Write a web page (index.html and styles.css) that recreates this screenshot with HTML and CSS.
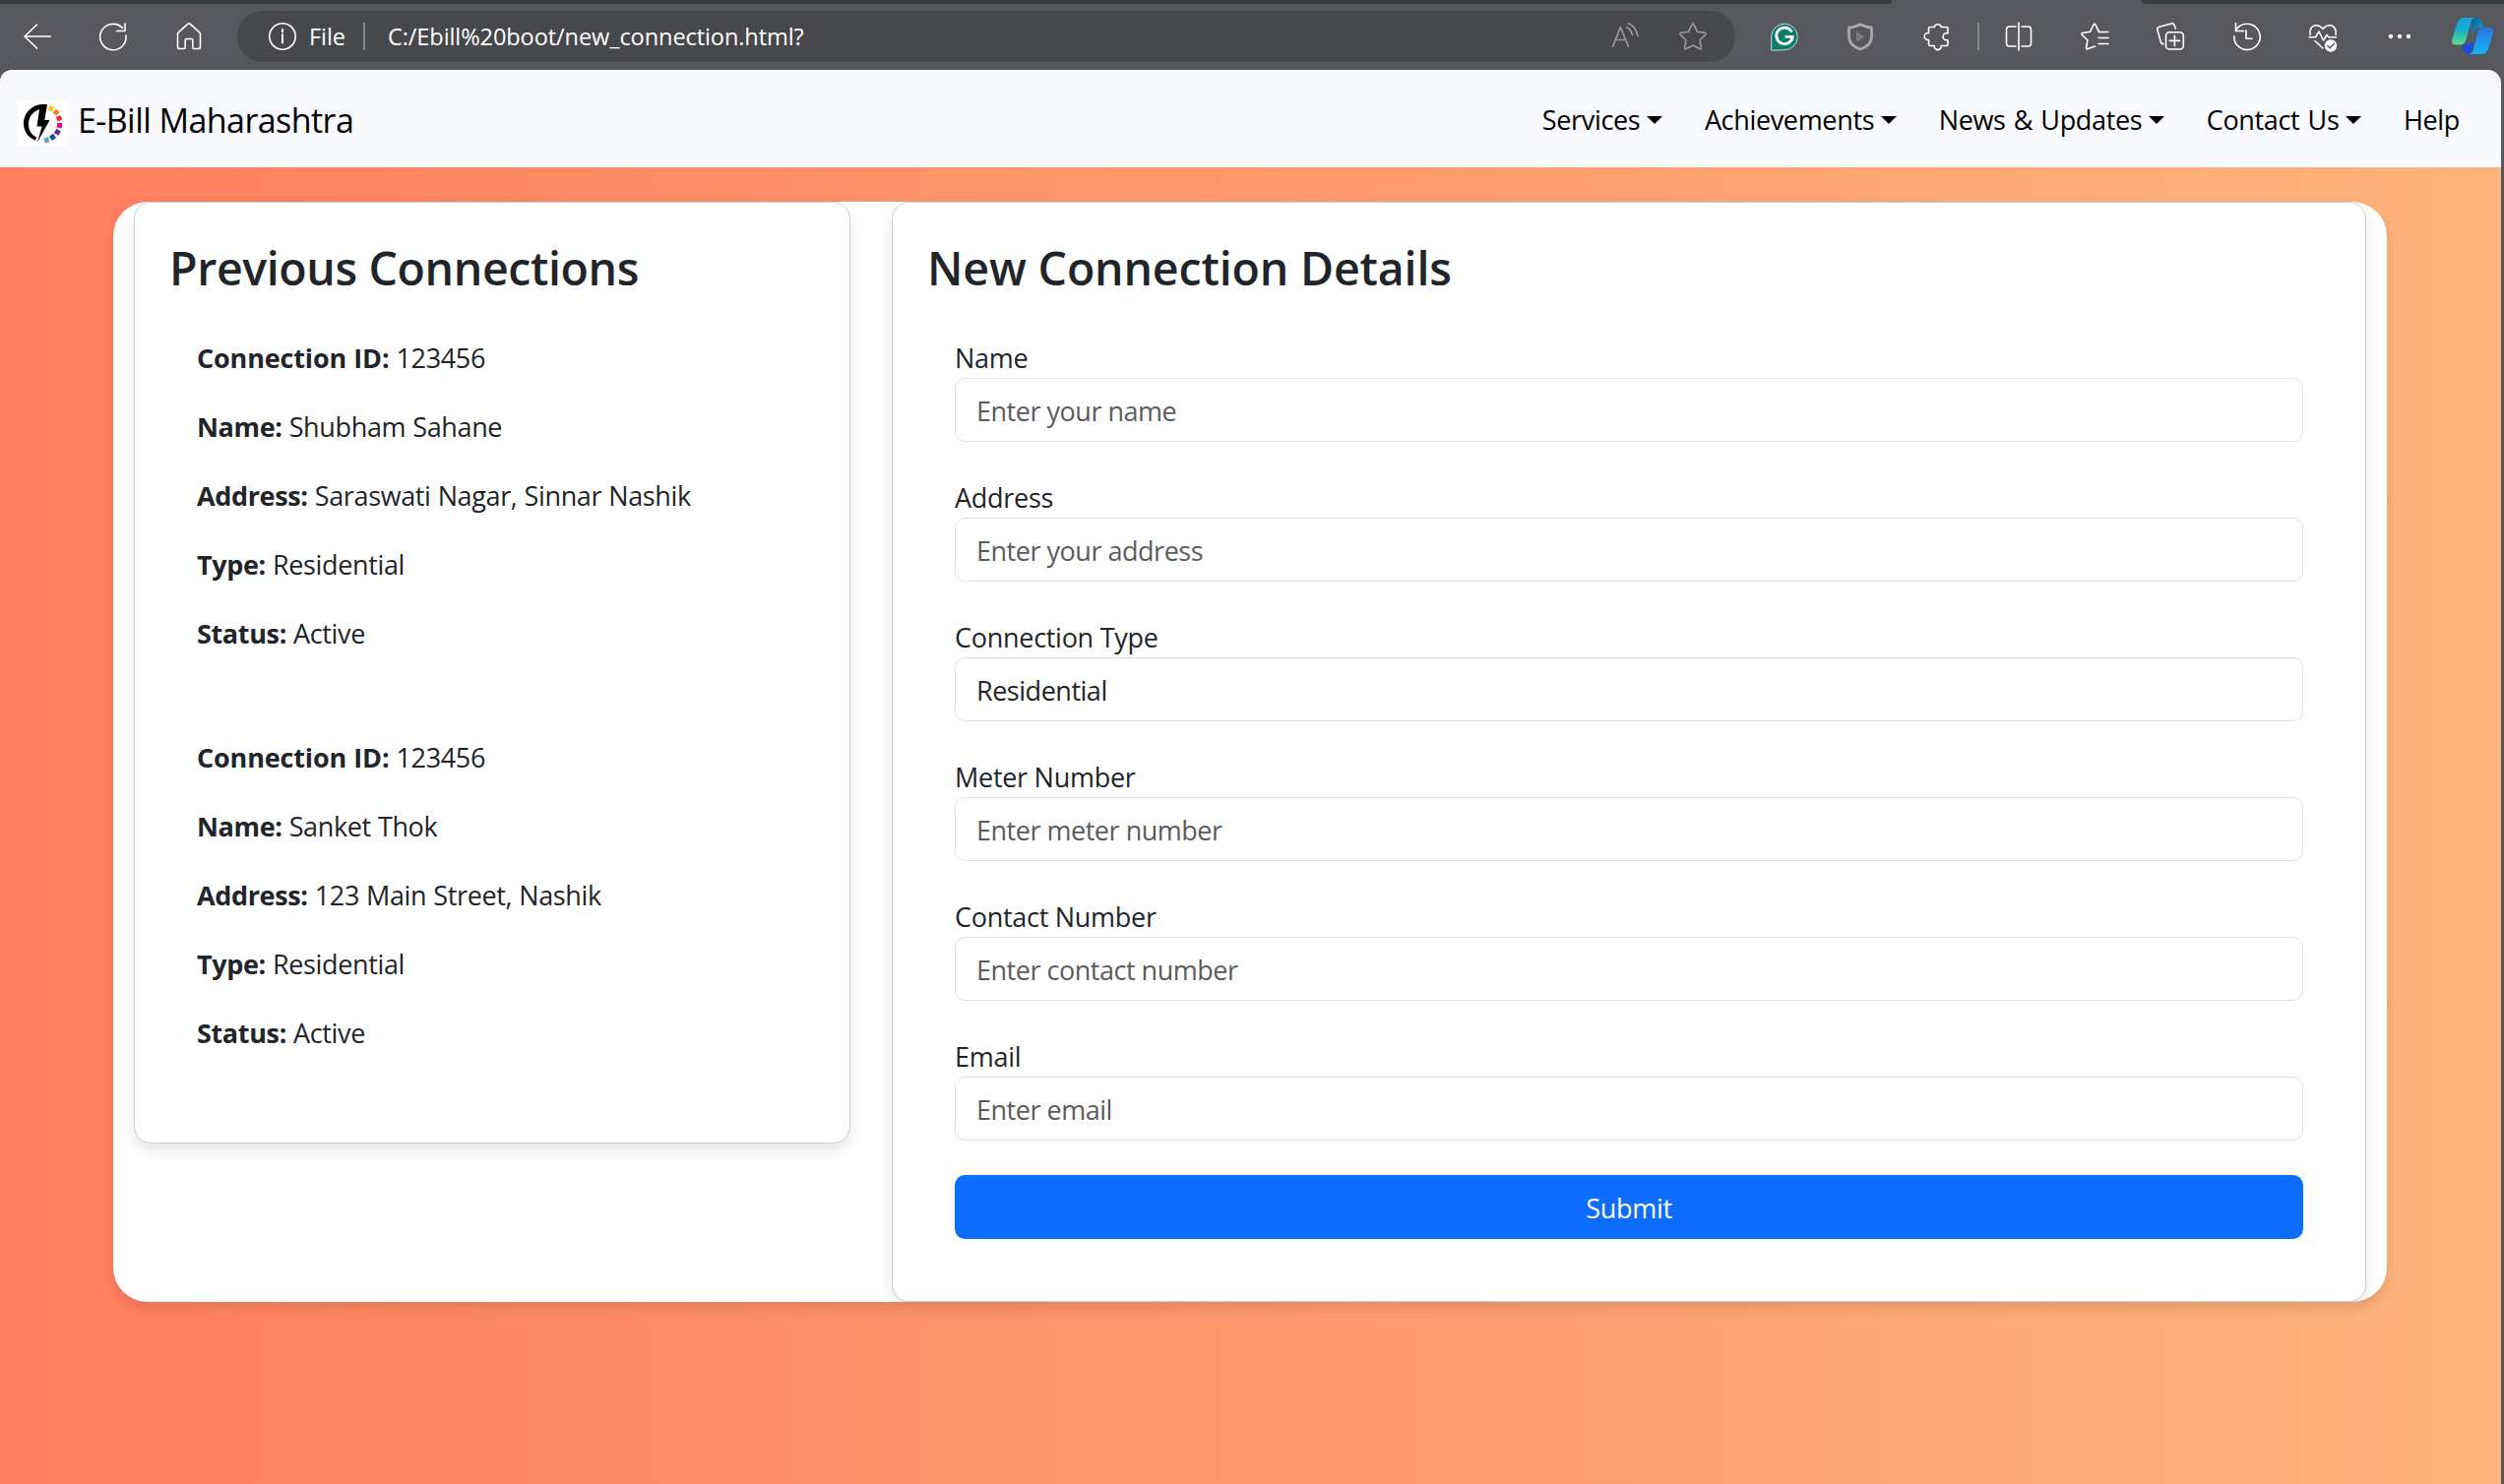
FILE: index.html
```html
<!DOCTYPE html>
<html lang="en">
<head>
<meta charset="utf-8">
<title>E-Bill Maharashtra</title>
<link rel="stylesheet" href="styles.css">
</head>
<body>
<header class="browser">
  <div class="tabstrip"><span class="tabs-left"></span><span class="tabs-right"></span></div>
  <div class="toolbar">
    <div class="nav-buttons">
      <svg class="ico" viewBox="0 0 28 28"><path d="M27.500 14H1M13.500 2 1 14l12.500 12"/></svg>
      <svg class="ico" viewBox="0 0 28 28"><path d="M23.500 5.500A13.200 13.200 0 1 0 27 13M26 1v7.500h-8.500"/></svg>
      <svg class="ico" viewBox="0 0 28 28"><path d="M2.500 11.500Q2.500 10.700 3 10.200L12.800 1.300Q14 .400 15.200 1.300L25 10.200q.500.500.500 1.300V25q0 1.500-1.500 1.500h-5q-1.200 0-1.200-1.200V18q0-1.500-1.500-1.500h-4.600q-1.500 0-1.500 1.500v7.300q0 1.200-1.200 1.200H4Q2.500 26.500 2.500 25z"/></svg>
    </div>
    <div class="address-bar">
      <svg class="ico" viewBox="0 0 28 28"><circle cx="14" cy="14" r="13.200"/><path class="bold" d="M14 12v8.500M14 7v2.400"/></svg>
      <span class="scheme">File</span>
      <span class="rule"></span>
      <span class="url">C:/Ebill%20boot/new_connection.html?</span>
      <svg class="ico dim" viewBox="0 0 28 28"><path d="M1.500 24.500 9.300 4.500 17.500 24.500M4.500 17.500h10M15.500 4.500Q20 7 21.500 12.500M17.500 0.800Q25 4 27 13.500"/></svg>
      <svg class="ico dim" viewBox="0 0 28 28"><path d="M13.100 1.800q.900-1.300 1.800 0l3.500 7.400 7.800 1.200q1.600.400.600 1.800l-5.700 5.600 1.300 7.900q.100 1.600-1.400 1.100L14 23.100l-7 3.700q-1.500.500-1.400-1.100l1.300-7.900-5.700-5.600q-1-1.400.600-1.800l7.800-1.200z"/></svg>
    </div>
    <div class="extensions">
      <svg class="ico" viewBox="0 0 28 28"><path class="grammarly" d="M.700 27.800V14A13.300 13.300 0 1 1 14 27.800z"/><path class="heavy" d="M20.800 8.500a8.300 8.300 0 1 0 1.500 5.800h-6.500"/></svg>
      <svg class="ico dim" viewBox="0 0 28 28"><path class="heavy soft" d="M14 1.800Q20 5 25.500 5v9c0 6.500-4 10.500-11.500 13C6.500 24.500 2.500 20.500 2.500 14V5Q8 5 14 1.800z"/><path class="play" d="m10 9 9 5.200-9 5.200z"/></svg>
      <svg class="ico" viewBox="0 0 28 28"><path d="M7 4.500h4.200a3.600 3.600 0 0 1 7 0h5.300q1.500 0 1.500 1.500v4.700h-1.500a3.500 3.500 0 0 0 0 7H25V22q0 1.500-1.500 1.500h-5.300v.600a3.500 3.500 0 0 1-7 0v-.600H7q-1.500 0-1.500-1.500v-4.500h-.800a3.500 3.500 0 0 1 0-7h.800V6Q5.500 4.500 7 4.500z"/></svg>
      <span class="rule"></span>
      <svg class="ico" viewBox="0 0 28 28"><path d="M11 4H4.500Q1.500 4 1.500 7v14q0 3 3 3H11M17 4h6.500q3 0 3 3v14q0 3-3 3H17M14 0v28"/></svg>
      <svg class="ico" viewBox="0 0 28 28"><path d="m14.500 24-7.700 2.800q-1.500.500-1.200-1.300l1.300-7.700-5.700-5.600q-1-1.300.600-1.700l7.700-1.200 3.600-7.300q.900-1.500 1.800 0l3.600 7.300 3.500.3M18 9.500h10M18 15.500h10M18 21.500h10"/></svg>
      <svg class="ico" viewBox="0 0 28 28"><rect x="9.500" y="9.700" width="17.800" height="17.300" rx="3.500"/><path d="M18.400 13.300v10.200M13.300 18.400h10.200M7 21.500q-2 .500-2.600-1.800L.900 7.500Q.300 5 2.700 4.300L15 1q2.500-.500 3.200 1.800L19.300 6"/></svg>
      <svg class="ico" viewBox="0 0 28 28"><path d="M3.200 6.800A13.200 13.200 0 1 1 .800 14M2.500.5v8h8M13 8v8.300h6"/></svg>
      <svg class="ico" viewBox="0 0 28 28"><path d="M1 12.200C-.200 7 3 2.800 7 2.800q4.200 0 7 3.700 2.800-3.700 7-3.700c4 0 7.200 4.200 6 9.400M0 14.800h6.500L10 9l4.500 9 3.500-5.500 1.800 2.300H27.500M6 18.500l8 7.500"/><circle class="badge" cx="22" cy="23.500" r="6.200"/><path class="tick" d="m18.800 23.500 2.300 2.200 4.200-4.300"/></svg>
      <svg class="ico" viewBox="0 0 28 28"><g class="badge"><circle cx="5" cy="14" r="2.200"/><circle cx="14" cy="14" r="2.200"/><circle cx="23" cy="14" r="2.200"/></g></svg>
      <svg class="copilot" viewBox="0 0 42 38">
        <defs>
          <linearGradient id="cp-left" x1="0" y1="0" x2="0" y2="1"><stop offset="0" stop-color="#1b9fe0"/><stop offset=".45" stop-color="#12b0cc"/><stop offset="1" stop-color="#63dc83"/></linearGradient>
          <linearGradient id="cp-right" x1="0" y1="0" x2="0" y2="1"><stop offset="0" stop-color="#2b74dc"/><stop offset="1" stop-color="#13b5fb"/></linearGradient>
          <linearGradient id="cp-fold" x1="0" y1="0" x2="1" y2="1"><stop offset="0" stop-color="#0b5c8c"/><stop offset="1" stop-color="#12a6df"/></linearGradient>
        </defs>
        <path fill="url(#cp-fold)" d="M20 0h5q4 0 5.300 4.500L32 10h-4q-3 0-4.500 3L20 17z"/>
        <path fill="#1d49dc" d="M22 25 19.500 37H17q-4 0-5.500-4L10 27.500h4q3 0 4.500-2.500z"/>
        <path fill="url(#cp-left)" d="M12 0h12q-3.500.500-5 5.500L14.500 22q-1.500 5.500-6 5.500H4q-5 0-3.700-5.500L5.500 5.500Q7.500 0 12 0z"/>
        <path fill="url(#cp-right)" d="M30 10h8q5 0 3.700 5.500L37 31.500Q35 37 30.500 37H17q4-.5 5-5.500l4.200-16Q27.500 10 30 10z"/>
      </svg>
    </div>
  </div>
</header>

<div class="page">
  <nav class="navbar">
    <a class="brand">
      <svg class="logo" viewBox="0 0 53 46">
        <rect width="53" height="46" fill="#fff"/>
        <path d="M31 4.300C18 1.800 7 11 7 23.500c0 8 4.500 14 11.800 17.200l1.300-3.200C14.500 34.700 11.500 29.500 12 23c.5-7 5-12 11-13.800L20.500 26.500h5.200L20.800 43 33.500 20h-5.200z"/>
        <g fill="none" stroke-width="5.200">
          <path stroke="#fcc419" d="m32.800 7.300 4.200 1.900"/>
          <path stroke="#f5822a" d="m38.300 10.400 3.500 3.600"/>
          <path stroke="#ee2b3b" d="m42.300 16 1.400 4.600"/>
          <path stroke="#ec0a8c" d="m43.600 22.800-.200 5"/>
          <path stroke="#6b2c91" d="m42.600 30.200-2.500 4.200"/>
          <path stroke="#1d4f9f" d="m38.500 35.900-4 3"/>
          <path stroke="#4ba9b8" d="m32.700 39.700-4.700 1.300"/>
        </g>
      </svg>
      <span>E-Bill Maharashtra</span>
    </a>
    <div class="links">
      <a class="link dropdown">Services</a>
      <a class="link dropdown">Achievements</a>
      <a class="link dropdown">News &amp; Updates</a>
      <a class="link dropdown">Contact Us</a>
      <a class="link">Help</a>
    </div>
  </nav>

  <main class="container">
    <section class="card previous">
      <h2>Previous Connections</h2>
      <div class="connection">
        <p><strong class="wide">Connection ID:</strong> 123456</p>
        <p><strong>Name:</strong> Shubham Sahane</p>
        <p><strong>Address:</strong> Saraswati Nagar, Sinnar Nashik</p>
        <p><strong>Type:</strong> Residential</p>
        <p><strong>Status:</strong> Active</p>
      </div>
      <div class="connection">
        <p><strong class="wide">Connection ID:</strong> 123456</p>
        <p><strong>Name:</strong> Sanket Thok</p>
        <p><strong>Address:</strong> 123 Main Street, Nashik</p>
        <p><strong>Type:</strong> Residential</p>
        <p><strong>Status:</strong> Active</p>
      </div>
    </section>

    <section class="card details">
      <h2>New Connection Details</h2>
      <form class="form">
        <div class="field"><label for="name">Name</label><input id="name" type="text" placeholder="Enter your name"></div>
        <div class="field"><label for="address">Address</label><input id="address" type="text" placeholder="Enter your address"></div>
        <div class="field"><label for="type">Connection Type</label><select id="type"><option>Residential</option></select></div>
        <div class="field"><label for="meter">Meter Number</label><input id="meter" type="text" placeholder="Enter meter number"></div>
        <div class="field"><label for="contact">Contact Number</label><input id="contact" type="text" placeholder="Enter contact number"></div>
        <div class="field"><label for="email">Email</label><input id="email" type="email" placeholder="Enter email"></div>
        <button type="button" class="submit">Submit</button>
      </form>
    </section>
  </main>
</div>
</body>
</html>
```
FILE: styles.css
```css
*, *::before, *::after { box-sizing: border-box; }

html, body { height: 100%; }

body {
  margin: 0;
  display: flex;
  flex-direction: column;
  overflow: hidden;
  background: #57585d;
  color: #212529;
  font: 27px/40px "Open Sans", "Noto Sans", sans-serif;
  letter-spacing: -0.28px;
}

/* Browser chrome */
.browser { flex: none; height: 71px; color: #fff; }
.tabstrip { display: flex; justify-content: space-between; height: 4px; }
.tabs-left { width: 1922px; background: #3a3b3f; border-bottom-right-radius: 10px; }
.tabs-right { width: 368px; background: #3a3b3f; border-bottom-left-radius: 10px; }

.toolbar { display: flex; align-items: center; height: 67px; padding: 0 12px 1px 24px; }
.nav-buttons { display: flex; flex: none; gap: 49px; width: 217px; }

.address-bar {
  display: flex;
  flex: none;
  align-items: center;
  width: 1522px;
  height: 52px;
  padding: 0 29px 0 32px;
  border-radius: 26px;
  background: #47484b;
  font-size: 23.6px;
  letter-spacing: -0.12px;
}
.scheme { width: 55px; margin-left: 13px; }
.rule { flex: none; width: 2px; height: 28px; background: #85868a; }
.url { flex: 1; margin-left: 23px; }
.address-bar .dim + .dim { margin-left: 41px; }

.extensions { display: flex; flex: 1; align-items: center; gap: 49.400px; margin-left: 36px; }
.extensions .rule { margin: 0 -24px 0 -22px; }

.ico {
  flex: none;
  width: 28px;
  height: 28px;
  overflow: visible;
  fill: none;
  stroke: #fff;
  stroke-width: 1.600;
  stroke-linecap: round;
  stroke-linejoin: round;
}
.ico.dim { stroke: #9b9b9c; }
.bold { stroke-width: 2; }
.heavy { stroke-width: 2.800; }
.soft { stroke: #a9a9aa; }
.play { fill: #7b7b7d; stroke: none; }
.grammarly { fill: #0a7d6c; stroke: #c9d5d3; stroke-width: 1; }
.badge { fill: #fff; stroke: none; }
.tick { stroke: #57585d; stroke-width: 1.500; }
.copilot { flex: none; width: 42px; height: 38px; margin-left: -10px; }

/* Page */
.page {
  flex: 1;
  width: 2541px;
  overflow: hidden;
  border-radius: 12px 14px 0 0;
  background: linear-gradient(to right, #ff7e5f, #feb47b);
}

.navbar {
  display: flex;
  align-items: center;
  justify-content: space-between;
  height: 99px;
  padding: 9px 42px 0 17px;
  background: #f8f9fc;
  color: #000;
}
.brand { display: flex; align-items: center; gap: 9px; font-size: 34px; letter-spacing: -0.56px; }
.brand span { margin-top: -7px; }
.logo { width: 53px; height: 46px; }
.links { display: flex; gap: 42.500px; margin-top: -7px; letter-spacing: -0.34px; word-spacing: 1.500px; }
.dropdown { display: flex; align-items: center; gap: 7px; }
.dropdown::after {
  content: "";
  margin-top: 1px;
  border: 8px solid transparent;
  border-top-color: #000;
  border-bottom: 0;
}

.container {
  display: grid;
  grid-template-columns: 728px 1498px;
  align-items: start;
  gap: 42px;
  width: 2310px;
  height: 1118px;
  margin: 35px 116px 0 115px;
  padding: 0 21px;
  border-radius: 35px;
  background: #fff;
  box-shadow: 0 7px 14px rgba(0, 0, 0, 0.1);
}

.card {
  padding: 35px;
  border: 1px solid #cdcecf;
  border-radius: 17.500px;
  background: #fff;
  box-shadow: 0 7px 14px rgba(0, 0, 0, 0.1);
}
.previous { height: 957px; }
.details { height: 1118px; clip-path: inset(0 -21px 0 -21px); }

h2 {
  margin: 0 0 13px;
  padding-top: 2px;
  font-size: 46.500px;
  font-weight: 600;
  line-height: 58px;
  letter-spacing: -0.38px;
}
.details h2 { letter-spacing: -0.16px; }

.connection { padding: 28px; letter-spacing: -0.36px; word-spacing: 0.400px; }
.connection p { margin: 0 0 28px; padding-top: 2px; }
.connection p:last-child { margin: 0; height: 70px; }
.connection:last-child { padding-bottom: 0; }
.wide { letter-spacing: -0.16px; }

.form { padding: 28px; }
.field { margin-bottom: 35px; }
.field label { display: block; padding-top: 2px; }
input, select {
  display: block;
  appearance: none;
  width: 100%;
  height: 65px;
  padding: 2px 21px 0;
  border: 1px solid #dee2e6;
  border-radius: 10.500px;
  background: #fff;
  color: #212529;
  font: inherit;
  letter-spacing: -0.48px;
}
input::placeholder { color: #595c5f; opacity: 1; }
.submit {
  display: block;
  width: 100%;
  height: 65px;
  padding: 2px 0 0;
  border: 0;
  border-radius: 10.500px;
  background: #0d6efd;
  color: #fff;
  font: inherit;
  letter-spacing: inherit;
}
```
